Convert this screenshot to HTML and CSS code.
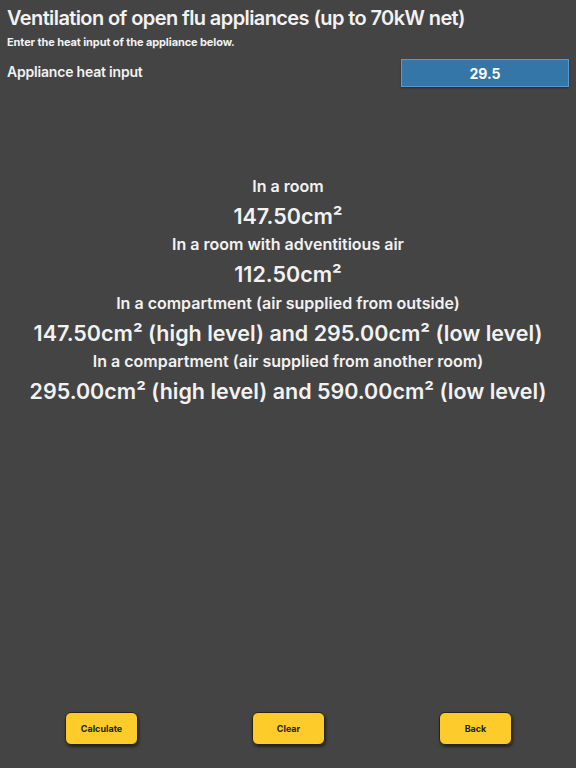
FILE: index.html
```html
<!DOCTYPE html>
<html>
<head>
<meta charset="utf-8">
<link rel="stylesheet" href="styles.css">
</head>
<body>
<div class="page">
  <header class="head">
    <h1 class="title">Ventilation of open flu appliances (up to 70kW net)</h1>
    <p class="sub">Enter the heat input of the appliance below.</p>
    <div class="row">
      <span class="label">Appliance heat input</span>
      <div class="input">29.5</div>
    </div>
  </header>
  <main class="results">
    <div class="lbl">In a room</div>
    <div class="val">147.50cm²</div>
    <div class="lbl">In a room with adventitious air</div>
    <div class="val">112.50cm²</div>
    <div class="lbl">In a compartment (air supplied from outside)</div>
    <div class="val">147.50cm² (high level) and 295.00cm² (low level)</div>
    <div class="lbl">In a compartment (air supplied from another room)</div>
    <div class="val">295.00cm² (high level) and 590.00cm² (low level)</div>
  </main>
  <footer class="buttons">
    <button class="btn">Calculate</button>
    <button class="btn">Clear</button>
    <button class="btn">Back</button>
  </footer>
</div>
</body>
</html>
```
FILE: styles.css
```css
html, body {
  margin: 0;
  padding: 0;
  background: #444444;
}
body {
  font-family: Inter, "Noto Sans", sans-serif;
  color: #f2f2f2;
  width: 576px;
  height: 768px;
  overflow: hidden;
}
.page {
  display: flex;
  flex-direction: column;
  height: 768px;
}
.head {
  padding: 5px 7px 0 7px;
}
.title {
  margin: 0;
  font-size: 20px;
  font-weight: 600;
  line-height: 26px;
  letter-spacing: -0.6px;
}
.sub {
  margin: 4px 0 0 0;
  font-size: 11px;
  font-weight: 700;
  line-height: 14px;
  letter-spacing: -0.1px;
}
.row {
  display: flex;
  justify-content: space-between;
  align-items: center;
  margin-top: 10px;
}
.label {
  font-size: 14px;
  font-weight: 600;
  letter-spacing: -0.2px;
  padding-bottom: 4px;
}
.input {
  width: 166px;
  height: 26px;
  box-sizing: content-box;
  background: #3476a7;
  border: 1px solid #5a9ad0;
  box-shadow: 0 1px 2px rgba(0,0,0,0.4);
  color: #fff;
  font-size: 14px;
  font-weight: 700;
  display: flex;
  align-items: center;
  justify-content: center;
}
.results {
  margin-top: 86px;
  display: flex;
  flex-direction: column;
  align-items: center;
  text-align: center;
}
.lbl {
  font-size: 16px;
  font-weight: 600;
  line-height: 27px;
}
.val {
  font-size: 21.5px;
  font-weight: 600;
  line-height: 29.3px;
  padding-top: 2px;
}
.buttons {
  margin-top: auto;
  display: flex;
  justify-content: space-between;
  padding: 0 64px 23px 65px;
}
.btn {
  width: 73px;
  height: 33px;
  background: #fdcb2a;
  border: 1px solid #2a2410;
  border-radius: 6px;
  box-shadow: 1px 2px 3px rgba(0,0,0,0.5);
  font-family: Inter, "Noto Sans", sans-serif;
  font-size: 9px;
  font-weight: 700;
  color: #222;
  padding: 0;
}
```
